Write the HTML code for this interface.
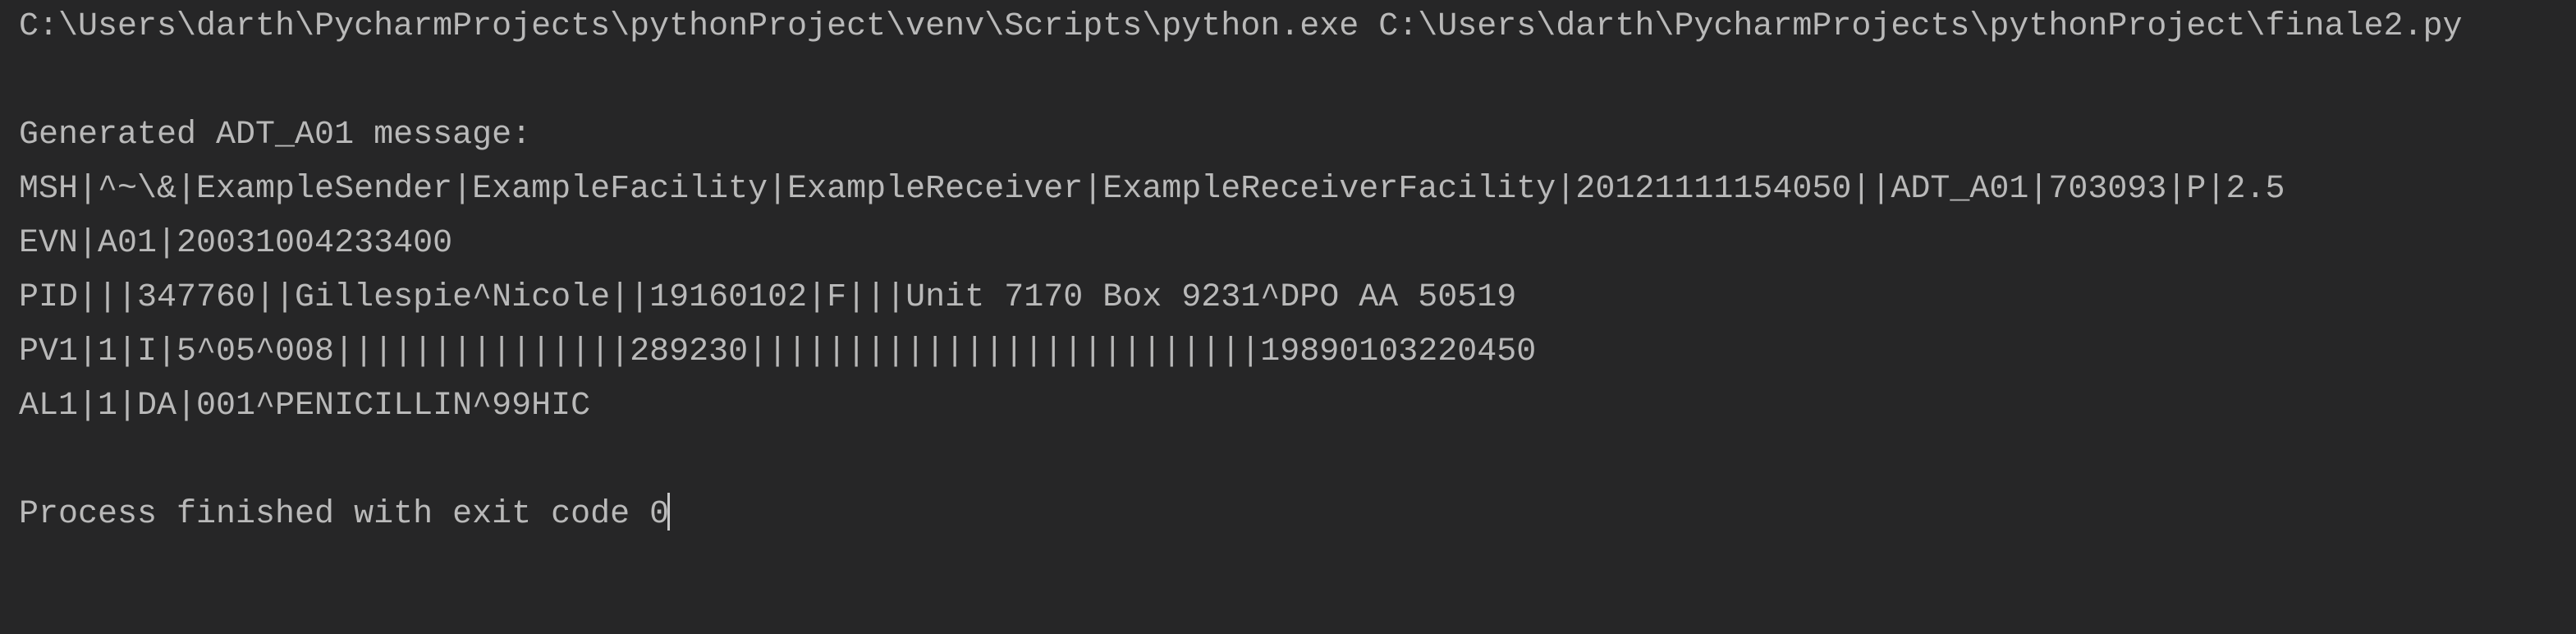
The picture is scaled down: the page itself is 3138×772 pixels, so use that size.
<!DOCTYPE html>
<html><head><meta charset="utf-8"><style>
html,body{margin:0;padding:0;width:3138px;height:772px;background:#262627;overflow:hidden}
pre{margin:0;position:absolute;left:23px;top:0px;font-family:"Liberation Mono",monospace;font-size:40px;line-height:66px;color:#b9b9b9;white-space:pre}
.cur{display:inline-block;width:3px;height:46px;background:#c8c8c8;vertical-align:-10px;margin-left:-2px}
</style></head><body>
<pre>C:\Users\darth\PycharmProjects\pythonProject\venv\Scripts\python.exe C:\Users\darth\PycharmProjects\pythonProject\finale2.py

Generated ADT_A01 message:
MSH|^~\&amp;|ExampleSender|ExampleFacility|ExampleReceiver|ExampleReceiverFacility|20121111154050||ADT_A01|703093|P|2.5
EVN|A01|20031004233400
PID|||347760||Gillespie^Nicole||19160102|F|||Unit 7170 Box 9231^DPO AA 50519
PV1|1|I|5^05^008|||||||||||||||289230||||||||||||||||||||||||||19890103220450
AL1|1|DA|001^PENICILLIN^99HIC

Process finished with exit code 0<span class="cur"></span></pre>
</body></html>
